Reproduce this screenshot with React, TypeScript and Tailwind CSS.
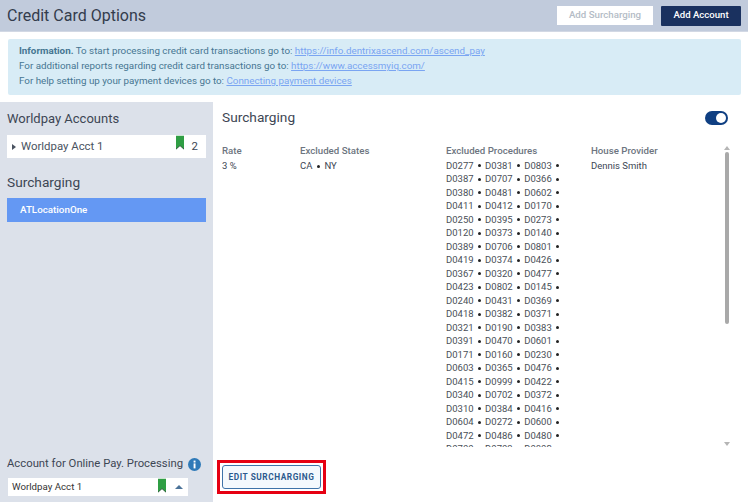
const font = "font-['Roboto',sans-serif]"

const procedures = [
  ["D0277", "D0381", "D0803"],
  ["D0387", "D0707", "D0366"],
  ["D0380", "D0481", "D0602"],
  ["D0411", "D0412", "D0170"],
  ["D0250", "D0395", "D0273"],
  ["D0120", "D0373", "D0140"],
  ["D0389", "D0706", "D0801"],
  ["D0419", "D0374", "D0426"],
  ["D0367", "D0320", "D0477"],
  ["D0423", "D0802", "D0145"],
  ["D0240", "D0431", "D0369"],
  ["D0418", "D0382", "D0371"],
  ["D0321", "D0190", "D0383"],
  ["D0391", "D0470", "D0601"],
  ["D0171", "D0160", "D0230"],
  ["D0603", "D0365", "D0476"],
  ["D0415", "D0999", "D0422"],
  ["D0340", "D0702", "D0372"],
  ["D0310", "D0384", "D0416"],
  ["D0604", "D0272", "D0600"],
  ["D0472", "D0486", "D0480"],
  ["D0700", "D0703", "D0802"],
]

function Bookmark({ className }: { className: string }) {
  return (
    <svg viewBox="0 0 9 15" className={className}>
      <path d="M0 0H9V15L4.5 11L0 15Z" fill="#2f9e44" />
      <path d="M0 15L4.5 11L9 15" fill="none" stroke="#1f4d2b" strokeWidth="1" />
    </svg>
  )
}

export default function App() {
  return (
    <div className={`${font} w-[748px] h-[502px] overflow-hidden bg-white flex flex-col text-[#3d4654]`}>
      <div className="h-[32px] shrink-0 bg-[#c1cbdc] border-b border-[#d2d8e4] flex items-center justify-between pl-[7px] pr-[7px]">
        <h1 className="text-[16px] text-[#333c4c]">Credit Card Options</h1>
        <div className="flex items-center gap-[8px]">
          <button className="w-[96px] h-[19px] bg-white text-[#b4bcc6] text-[9.7px] font-medium">Add Surcharging</button>
          <button className="w-[80px] h-[20px] bg-[#1a315f] text-white text-[9.6px] font-medium rounded-[1px]">Add Account</button>
        </div>
      </div>

      <div className="ml-[8px] mr-[7px] mt-[7px] h-[56px] shrink-0 bg-[#d8ecf6] rounded-[2px] pl-[11px] pt-[4px] text-[9.8px] leading-[15px] text-[#467692]">
        <p>
          <b className="font-bold">Information.</b> To start processing credit card transactions go to:{" "}
          <a className="text-[#7aa5f2] underline">https://info.dentrixascend.com/ascend_pay</a>
        </p>
        <p>
          For additional reports regarding credit card transactions go to:{" "}
          <a className="text-[#7aa5f2] underline">https://www.accessmyiq.com/</a>
        </p>
        <p>
          For help setting up your payment devices go to:{" "}
          <a className="text-[#7aa5f2] underline">Connecting payment devices</a>
        </p>
      </div>

      <div className="flex-1 min-h-0 mt-[7px] flex">
        <aside className="w-[213px] shrink-0 bg-[#dce1ea] flex flex-col pl-[7px] pr-[7px]">
          <h2 className="text-[13px] leading-[18px] mt-[8px] text-[#3d4654]">Worldpay Accounts</h2>
          <div className="mt-[7px] h-[23px] bg-white flex items-center pl-[5px] pr-[8px] text-[11.4px] text-[#4a5361]">
            <span className="w-0 h-0 border-y-[3px] border-y-transparent border-l-[4px] border-l-[#4a5361] mr-[5px]" />
            <span>Worldpay Acct 1</span>
            <Bookmark className="w-[8px] h-[15px] ml-auto mb-[8px]" />
            <span className="ml-[8px] text-[#3d4654]">2</span>
          </div>
          <h2 className="text-[13.7px] leading-[18px] mt-[15px] text-[#3d4654]">Surcharging</h2>
          <div className="mt-[7px] h-[24px] bg-[#6498f3] flex items-center pl-[13px] text-[9.8px] font-medium text-white">ATLocationOne</div>
          <div className="mt-auto flex items-center gap-[5px] text-[11.3px] text-[#3d4654]">
            <span>Account for Online Pay. Processing</span>
            <svg viewBox="0 0 13 13" className="w-[13px] h-[13px]">
              <circle cx="6.5" cy="6.5" r="6.5" fill="#2f7ab8" />
              <rect x="5.6" y="2.6" width="1.9" height="1.9" fill="#fff" />
              <rect x="5.6" y="5.4" width="1.9" height="5" fill="#fff" />
            </svg>
          </div>
          <div className="mt-[5px] mb-[6px] ml-px w-[180px] h-[18px] bg-white flex items-center pl-[4px] pr-[5px] text-[9.7px] text-[#333]">
            <span>Worldpay Acct 1</span>
            <Bookmark className="w-[8px] h-[15px] ml-auto mb-[3px]" />
            <span className="ml-[9px] w-0 h-0 border-x-[4px] border-x-transparent border-b-[4px] border-b-[#4b7399]" />
          </div>
        </aside>

        <main className="flex-1 min-w-0 flex flex-col pl-[9px]">
          <div className="h-[30px] mt-[1px] flex items-center justify-between pr-[20px]">
            <h2 className="text-[13.7px] text-[#3d4654] mb-[2px]">Surcharging</h2>
            <span className="w-[23px] h-[14px] rounded-full bg-[#0f3f82] relative">
              <span className="absolute right-[2px] top-[2px] w-[10px] h-[10px] rounded-full bg-white" />
            </span>
          </div>

          <div className="mt-[11px] h-[303px] overflow-hidden flex relative text-[9.5px]">
            <div className="w-[78px] shrink-0">
              <div className="h-[14px] leading-[14px] text-[9.7px] font-medium text-[#6d7580]">Rate</div>
              <div className="mt-[1px] leading-[14px] text-[#3d4654]">3 %</div>
            </div>
            <div className="w-[146px] shrink-0">
              <div className="h-[14px] leading-[14px] text-[9.7px] font-medium text-[#6d7580]">Excluded States</div>
              <div className="mt-[1px] h-[14px] flex items-center text-[#3d4654]">
                CA
                <span className="w-[3px] h-[3px] rounded-full bg-[#222] mx-[4.5px]" />
                NY
              </div>
            </div>
            <div className="w-[145px] shrink-0">
              <div className="h-[14px] leading-[14px] text-[9.7px] font-medium text-[#6d7580]">Excluded Procedures</div>
              <div className="mt-[1px]">
                {procedures.map((row) => (
                  <div key={row[0]} className="h-[13.5px] flex items-center text-[#4a4f57]">
                    {row.map((code) => (
                      <span key={code} className="flex items-center">
                        {code}
                        <span className="w-[3px] h-[3px] rounded-full bg-[#222] mx-[4.25px]" />
                      </span>
                    ))}
                  </div>
                ))}
              </div>
            </div>
            <div className="flex-1">
              <div className="h-[14px] leading-[14px] text-[9.7px] font-medium text-[#6d7580]">House Provider</div>
              <div className="mt-[1px] leading-[14px] text-[#3d4654]">Dennis Smith</div>
            </div>
            <div className="w-[8px] mr-[17px] flex flex-col items-center pt-[2px] pb-[1px]">
              <span className="w-0 h-0 border-x-[3px] border-x-transparent border-b-[4px] border-b-[#b5b5b5]" />
              <span className="mt-[2px] w-[4px] h-[172px] bg-[#a9a9a9] rounded-full" />
              <span className="mt-auto w-0 h-0 border-x-[3px] border-x-transparent border-t-[4px] border-t-[#b5b5b5]" />
            </div>
          </div>

          <div className="mt-[13px] -ml-[5px] self-start border-[3px] border-[#e60012] p-[2px]">
            <button className="block w-[99px] h-[24px] bg-[#f4f9fd] border border-[#3f73a8] rounded-[3px] text-[8.3px] font-bold tracking-[0.55px] text-[#2c5a8e]">EDIT SURCHARGING</button>
          </div>
        </main>
      </div>
    </div>
  )
}
